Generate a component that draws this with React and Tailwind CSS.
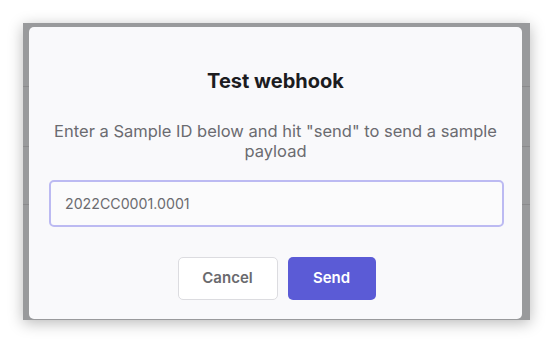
import React from "react";

export default function App() {
  return (
    <div
      className="w-[554px] h-[343px] bg-white pt-[23px] pl-[23px]"
      style={{ fontFamily: "Inter, 'Noto Sans', sans-serif" }}
    >
      <div className="relative w-[507px] h-[297px] bg-[#999a9c] pl-[6px] pt-[4px] shadow-[0_3px_14px_rgba(0,0,0,0.28)]">
        <div className="absolute left-0 right-0 top-[63px] h-px bg-[#8a8a8c]" />
        <div className="absolute left-0 right-0 top-[123px] h-px bg-[#8a8a8c]" />
        <div className="absolute left-0 right-0 top-[181px] h-px bg-[#8a8a8c]" />
        <div className="relative w-[493px] h-[292px] bg-[#f9f9fb] rounded-[5px] flex flex-col items-center pt-[40px]">
          <h2 className="text-[20px] leading-[28px] font-bold text-[#1c1c1f]">
            Test webhook
          </h2>
          <p className="mt-[26px] text-[16.5px] leading-[20px] text-[#6b6b70] text-center px-[20px]">
            Enter a Sample ID below and hit "send" to send a sample payload
          </p>
          <div className="mt-[19px] w-[455px] h-[47px] ml-[2px] border-2 border-[#bcbaf2] rounded-[5px] bg-[#fbfbfc] flex items-center pl-[14px] text-[14.2px] text-[#6b6b70]">
            2022CC0001.0001
          </div>
          <div className="mt-[30px] flex gap-[10px] ml-[2px]">
            <button className="w-[100px] h-[43px] rounded-[5px] border border-[#dcdce0] bg-white text-[15px] font-semibold text-[#6a6a6e]">
              Cancel
            </button>
            <button className="w-[88px] h-[43px] rounded-[5px] bg-[#5b5bd6] text-[15px] font-semibold text-white">
              Send
            </button>
          </div>
        </div>
      </div>
    </div>
  );
}
